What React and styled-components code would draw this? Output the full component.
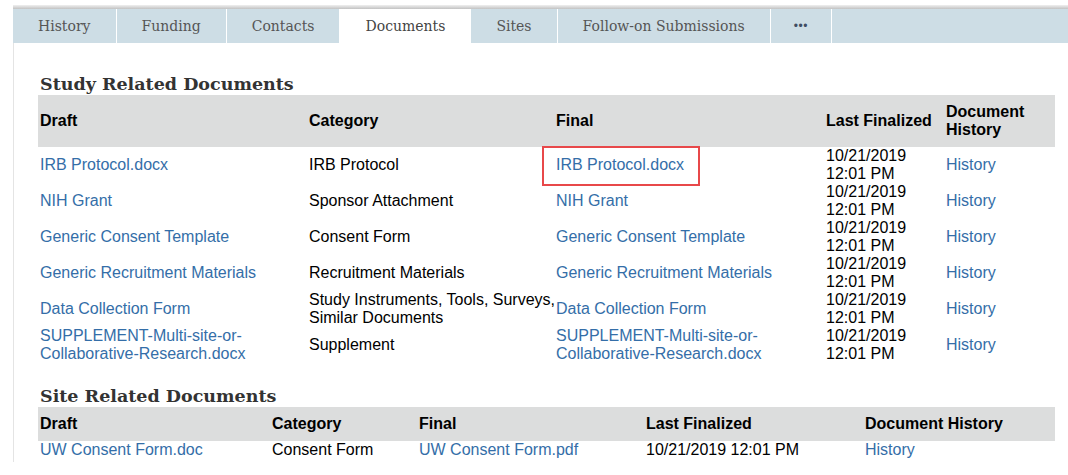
import React from "react";
import styled, { createGlobalStyle } from "styled-components";

const GlobalStyle = createGlobalStyle`
  html, body {
    margin: 0;
    padding: 0;
    background: #fff;
  }
  body {
    font-family: "Liberation Sans", Arial, sans-serif;
  }
`;

const Page = styled.div`
  padding-top: 5px;
  margin-left: 13px;
`;

const TopShade = styled.div`
  height: 4px;
  background: linear-gradient(to bottom, #f0f0f0, #c2c2c2);
`;

const TabBar = styled.div`
  display: flex;
  height: 34px;
  background: #cddde5;
`;

const Tab = styled.div`
  display: flex;
  align-items: center;
  padding: 0 ${(p) => (p.$narrow ? "23px" : "25px")};
  border-right: 1px solid #fff;
  background: ${(p) => (p.$active ? "#fff" : "transparent")};
  color: ${(p) => (p.$active ? "#444" : "#555")};
  font-family: "DejaVu Serif", serif;
  font-size: 14px;
  white-space: nowrap;
`;

const Dots = styled.span`
  font-family: "Liberation Sans", sans-serif;
  font-size: 12px;
  color: #3f4d63;
  letter-spacing: 0.5px;
`;

const Panel = styled.div`
  border-left: 1px solid #e4e4e4;
  padding: 30px 0 3px 24px;
`;

const SectionTitle = styled.h2`
  margin: ${(p) => (p.$first ? "0" : "22px 0 0")};
  padding-left: 2px;
  font-family: "DejaVu Serif", serif;
  font-size: 17.5px;
  line-height: 22px;
  font-weight: bold;
  color: #333;
`;

const Table = styled.table`
  width: 1017px;
  table-layout: fixed;
  border-collapse: collapse;
  font-size: 16px;
  line-height: 18px;
  color: #000;
`;

const HeadRow = styled.tr`
  background: #dcdddd;
`;

const Th = styled.th`
  padding: 8px 2px;
  text-align: left;
  vertical-align: middle;
  font-weight: bold;
`;

const Td = styled.td`
  position: relative;
  padding: 0 2px;
  vertical-align: middle;
  white-space: ${(p) => (p.$nowrap ? "nowrap" : "normal")};
`;

const DocLink = styled.a`
  color: #346ea8;
  text-decoration: none;
  cursor: pointer;
`;

const Highlight = styled.span`
  position: absolute;
  left: -12px;
  top: -1px;
  width: 158px;
  height: 40px;
  box-sizing: border-box;
  border: 2px solid #e8484a;
  pointer-events: none;
`;

const tabs = ["History", "Funding", "Contacts", "Documents", "Sites", "Follow-on Submissions"];

const studyCols = [269, 247, 270, 120, 111];
const siteCols = [232, 147, 227, 219, 192];

const studyDocs = [
  { draft: "IRB Protocol.docx", category: ["IRB Protocol"], final: "IRB Protocol.docx", marked: true },
  { draft: "NIH Grant", category: ["Sponsor Attachment"], final: "NIH Grant" },
  { draft: "Generic Consent Template", category: ["Consent Form"], final: "Generic Consent Template" },
  { draft: "Generic Recruitment Materials", category: ["Recruitment Materials"], final: "Generic Recruitment Materials" },
  {
    draft: "Data Collection Form",
    category: ["Study Instruments, Tools, Surveys,", "Similar Documents"],
    final: "Data Collection Form",
  },
  {
    draft: "SUPPLEMENT-Multi-site-or-Collaborative-Research.docx",
    category: ["Supplement"],
    final: "SUPPLEMENT-Multi-site-or-Collaborative-Research.docx",
  },
];

const siteDocs = [
  { draft: "UW Consent Form.doc", category: "Consent Form", final: "UW Consent Form.pdf" },
];

function Cols({ widths }) {
  return (
    <colgroup>
      {widths.map((w, i) => (
        <col key={i} style={{ width: w }} />
      ))}
    </colgroup>
  );
}

export default function App() {
  return (
    <>
      <GlobalStyle />
      <Page>
        <TopShade />
        <TabBar>
          {tabs.map((t) => (
            <Tab key={t} $active={t === "Documents"}>
              {t}
            </Tab>
          ))}
          <Tab $narrow>
            <Dots>•••</Dots>
          </Tab>
        </TabBar>

        <Panel>
          <SectionTitle $first>Study Related Documents</SectionTitle>
          <Table>
            <Cols widths={studyCols} />
            <thead>
              <HeadRow>
                <Th>Draft</Th>
                <Th>Category</Th>
                <Th>Final</Th>
                <Th>Last Finalized</Th>
                <Th>Document History</Th>
              </HeadRow>
            </thead>
            <tbody>
              {studyDocs.map((d) => (
                <tr key={d.draft + d.category[0]}>
                  <Td>
                    <DocLink>{d.draft}</DocLink>
                  </Td>
                  <Td $nowrap>
                    {d.category.map((line, i) => (
                      <React.Fragment key={line}>
                        {i > 0 && <br />}
                        {line}
                      </React.Fragment>
                    ))}
                  </Td>
                  <Td>
                    <DocLink>{d.final}</DocLink>
                    {d.marked && <Highlight />}
                  </Td>
                  <Td>10/21/2019 12:01 PM</Td>
                  <Td>
                    <DocLink>History</DocLink>
                  </Td>
                </tr>
              ))}
            </tbody>
          </Table>

          <SectionTitle>Site Related Documents</SectionTitle>
          <Table>
            <Cols widths={siteCols} />
            <thead>
              <HeadRow>
                <Th>Draft</Th>
                <Th>Category</Th>
                <Th>Final</Th>
                <Th>Last Finalized</Th>
                <Th>Document History</Th>
              </HeadRow>
            </thead>
            <tbody>
              {siteDocs.map((d) => (
                <tr key={d.draft}>
                  <Td>
                    <DocLink>{d.draft}</DocLink>
                  </Td>
                  <Td>{d.category}</Td>
                  <Td>
                    <DocLink>{d.final}</DocLink>
                  </Td>
                  <Td>10/21/2019 12:01 PM</Td>
                  <Td>
                    <DocLink>History</DocLink>
                  </Td>
                </tr>
              ))}
            </tbody>
          </Table>
        </Panel>
      </Page>
    </>
  );
}
